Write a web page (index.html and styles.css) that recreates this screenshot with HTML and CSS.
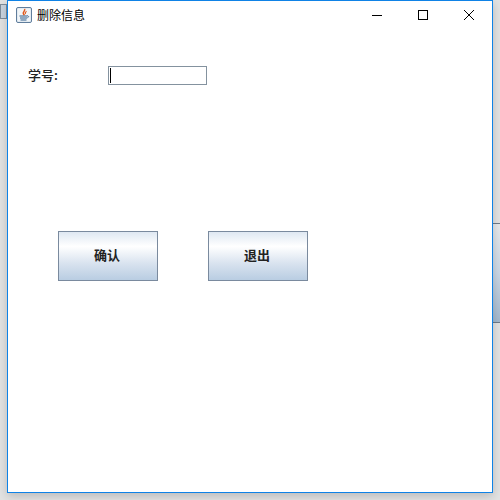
FILE: index.html
```html
<!DOCTYPE html>
<html lang="zh-CN">
<head>
  <meta charset="UTF-8">
  <title>删除信息</title>
  <link rel="stylesheet" href="styles.css">
</head>
<body>
  <!-- Windows behind the dialog -->
  <div class="back-tab"></div>
  <div class="back-panel"></div>

  <div class="window">
    <div class="titlebar">
      <svg class="java-icon" width="16" height="16" viewBox="0 0 16 16">
        <rect x="0.5" y="0.5" width="15" height="15" rx="1.5" fill="#d5e0eb" stroke="#5f7d9c"/>
        <rect x="1.5" y="1.5" width="13" height="13" rx="0.5" fill="#f1f5f8"/>
        <path d="M8.500 2c1.200 1.700-1.700 2.700-1.200 4.500.2.700.8 1.200 1 1.700" fill="none" stroke="#e0581c" stroke-width="1.500"/>
        <path d="M10.500 4.200c-1.200.8-1.700 1.500-1.100 2.900" fill="none" stroke="#e0581c" stroke-width="1.100"/>
        <path d="M3.500 9h7.500M4 11h7M4.500 13h6" fill="none" stroke="#2f5c8a" stroke-width="1.100"/>
        <path d="M11 8.800c1.800-.3 2.300 1.400.3 2" fill="none" stroke="#2f5c8a" stroke-width="0.900"/>
      </svg>
      <span class="title">删除信息</span>
      <div class="controls">
        <svg class="control" width="46" height="30" viewBox="0 0 46 30"><path d="M18 15.500h10" stroke="#000" fill="none"/></svg>
        <svg class="control" width="46" height="30" viewBox="0 0 46 30"><rect x="18.500" y="10.500" width="9" height="9" stroke="#000" fill="none"/></svg>
        <svg class="control" width="46" height="30" viewBox="0 0 46 30"><path d="M18 10l10 10M28 10l-10 10" stroke="#000" fill="none"/></svg>
      </div>
    </div>

    <div class="content">
      <div class="form-row">
        <label class="field-label" for="studentId">学号:</label>
        <div class="text-input" id="studentId"><span class="caret"></span></div>
      </div>
      <div class="button-row">
        <button type="button" class="swing-button">确认</button>
        <button type="button" class="swing-button">退出</button>
      </div>
    </div>
  </div>
</body>
</html>
```

FILE: styles.css
```css
html, body {
  margin: 0;
  padding: 0;
  height: 500px;
  overflow: hidden;
}
body {
  background: #e2e2e2;
  font-family: "Noto Sans CJK SC", "Liberation Sans", sans-serif;
}
.back-tab {
  position: absolute;
  left: 0;
  top: 4px;
  width: 7px;
  height: 15px;
  background: #c9d3de;
  border: 1px solid #7f8c99;
  box-sizing: border-box;
}
.back-panel {
  position: absolute;
  left: 493px;
  top: 223px;
  width: 7px;
  height: 100px;
  background: linear-gradient(#e6e8ea, #c9d6e4 50%, #a3b8cd);
  border-top: 1px solid #6d7a88;
  border-bottom: 1px solid #6d7a88;
  box-sizing: border-box;
}
.window {
  position: absolute;
  left: 7px;
  top: 0;
  width: 486px;
  height: 493px;
  box-sizing: border-box;
  background: #fff;
  border: 1px solid #0f82e6;
  box-shadow: 0 3px 9px rgba(0,0,0,0.18);
}
.titlebar {
  display: flex;
  align-items: center;
  height: 28px;
  padding-left: 8px;
}
.java-icon { flex-shrink: 0; }
.title {
  margin-left: 5px;
  padding-bottom: 2px;
  font-size: 12px;
  color: #000;
}
.controls {
  display: flex;
  margin-left: auto;
}
.control { display: block; }
.content {
  padding: 37px 0 0 20px;
}
.form-row {
  display: flex;
  align-items: center;
  height: 19px;
}
.field-label {
  width: 80px;
  padding-bottom: 2px;
  font-size: 13px;
  font-weight: 500;
  color: #222;
}
.text-input {
  width: 99px;
  height: 19px;
  box-sizing: border-box;
  border: 1px solid #84929f;
  background: #fff;
  padding: 1px;
}
.caret {
  display: block;
  width: 1px;
  height: 15px;
  background: #000;
}
.button-row {
  display: flex;
  gap: 50px;
  margin-top: 146px;
  padding-left: 30px;
}
.swing-button {
  width: 100px;
  height: 50px;
  padding: 0 2px 3px 0;
  border: 1px solid #7a8a9e;
  background: linear-gradient(#dfe8f2, #ffffff 30%, #d9e3ef 65%, #b9cde2);
  font-family: inherit;
  font-size: 13px;
  font-weight: bold;
  color: #222;
}
```
